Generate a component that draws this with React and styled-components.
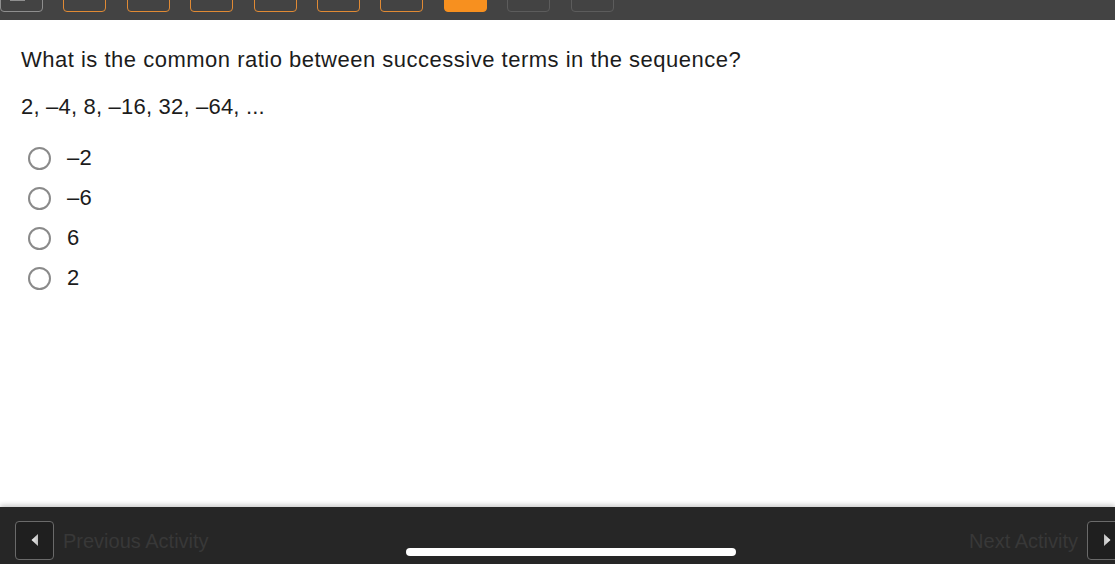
import React from 'react';
import styled, { createGlobalStyle } from 'styled-components';

const GlobalStyle = createGlobalStyle`
	html, body {
		margin: 0;
		padding: 0;
		height: 100%;
		background: #ffffff;
	}
	body {
		font-family: 'Liberation Sans', Arial, Helvetica, sans-serif;
		color: #1c1c1c;
		overflow: hidden;
	}
	#root {
		height: 100%;
	}
`;

const Page = styled.div`
	display: flex;
	flex-direction: column;
	height: 100vh;
	position: relative;
`;

const TopBar = styled.div`
	height: 20px;
	flex-shrink: 0;
	background: #434343;
	display: flex;
	align-items: flex-end;
	gap: 20.4px;
	overflow: hidden;
`;

const Tile = styled.div`
	position: relative;
	width: 43px;
	height: 30px;
	margin-bottom: 8px;
	flex-shrink: 0;
	box-sizing: border-box;
	border-radius: 4px;
	border: 1.5px solid
		${({ kind }) =>
			kind === 'done' ? '#e08a34' : kind === 'current' ? '#f7901f' : kind === 'home' ? '#8e8e8e' : '#5c5c5c'};
	background: ${({ kind }) => (kind === 'current' ? '#f7901f' : 'transparent')};
`;

const HomeMark = styled.span`
	position: absolute;
	left: 9px;
	top: 0;
	width: 15px;
	height: 18px;
	background: #8f8f8f;
`;

const Content = styled.main`
	flex: 1;
	padding: 28px 21px 0;
`;

const Question = styled.p`
	margin: 0;
	font-size: 22px;
	letter-spacing: 0.5px;
	line-height: 24px;
`;

const Sequence = styled.p`
	margin: 23px 0 0;
	font-size: 22px;
	letter-spacing: 0.2px;
	line-height: 24px;
`;

const Options = styled.div`
	margin-top: 19px;
	display: flex;
	flex-direction: column;
`;

const Option = styled.label`
	height: 40px;
	display: flex;
	align-items: center;
	gap: 16px;
	padding-left: 7px;
	font-size: 22px;
	letter-spacing: 0.3px;
	cursor: pointer;
`;

const Radio = styled.span`
	width: 23px;
	height: 23px;
	box-sizing: border-box;
	border-radius: 50%;
	border: 2px solid #8a8a8a;
	background: #fff;
	flex-shrink: 0;
`;

const Footer = styled.footer`
	height: 57px;
	flex-shrink: 0;
	background: #262626;
	box-shadow: 0 -2px 5px rgba(0, 0, 0, 0.22);
	display: flex;
	justify-content: space-between;
	align-items: flex-start;
	padding: 12px 0 0 15px;
	box-sizing: border-box;
	overflow: hidden;
`;

const NavGroup = styled.div`
	display: flex;
	align-items: center;
	gap: 9px;
	margin-right: ${({ right }) => (right ? '-11px' : '0')};
`;

const NavButton = styled.button`
	width: 39px;
	height: 39px;
	padding: 0;
	box-sizing: border-box;
	border-radius: 4px;
	border: 1.5px solid #6a6a6a;
	background: #1f1f1f;
	display: flex;
	align-items: center;
	justify-content: center;
`;

const NavLabel = styled.span`
	font-size: 20px;
	color: #383838;
	line-height: 39px;
	padding-top: 3px;
`;

const HomeIndicator = styled.div`
	position: absolute;
	left: 406px;
	bottom: 8px;
	width: 330px;
	height: 8px;
	border-radius: 4px;
	background: #ffffff;
`;

const Arrow = ({ dir }) => (
	<svg width="10" height="14" viewBox="0 0 10 14">
		<defs>
			<linearGradient id={`g-${dir}`} x1="0" y1="0" x2="1" y2="0">
				<stop offset="0" stopColor={dir === 'left' ? '#f2f2f2' : '#bdbdbd'} />
				<stop offset="1" stopColor={dir === 'left' ? '#bdbdbd' : '#f2f2f2'} />
			</linearGradient>
		</defs>
		{dir === 'left' ? (
			<polygon points="1.5,7 8,1 8,13" fill={`url(#g-${dir})`} />
		) : (
			<polygon points="8.5,7 2,1 2,13" fill={`url(#g-${dir})`} />
		)}
	</svg>
);

const tiles = ['home', 'done', 'done', 'done', 'done', 'done', 'done', 'current', 'todo', 'todo'];
const choices = ['–2', '–6', '6', '2'];

const App = () => {
	return (
		<Page>
			<GlobalStyle />
			<TopBar>
				{tiles.map((kind, i) => (
					<Tile key={i} kind={kind}>
						{kind === 'home' && <HomeMark />}
					</Tile>
				))}
			</TopBar>
			<Content>
				<Question>What is the common ratio between successive terms in the sequence?</Question>
				<Sequence>2, –4, 8, –16, 32, –64, ...</Sequence>
				<Options>
					{choices.map((c) => (
						<Option key={c}>
							<Radio />
							{c}
						</Option>
					))}
				</Options>
			</Content>
			<Footer>
				<NavGroup>
					<NavButton aria-label="Previous Activity">
						<Arrow dir="left" />
					</NavButton>
					<NavLabel>Previous Activity</NavLabel>
				</NavGroup>
				<NavGroup right>
					<NavLabel>Next Activity</NavLabel>
					<NavButton aria-label="Next Activity">
						<Arrow dir="right" />
					</NavButton>
				</NavGroup>
			</Footer>
			<HomeIndicator />
		</Page>
	);
};

export default App;
